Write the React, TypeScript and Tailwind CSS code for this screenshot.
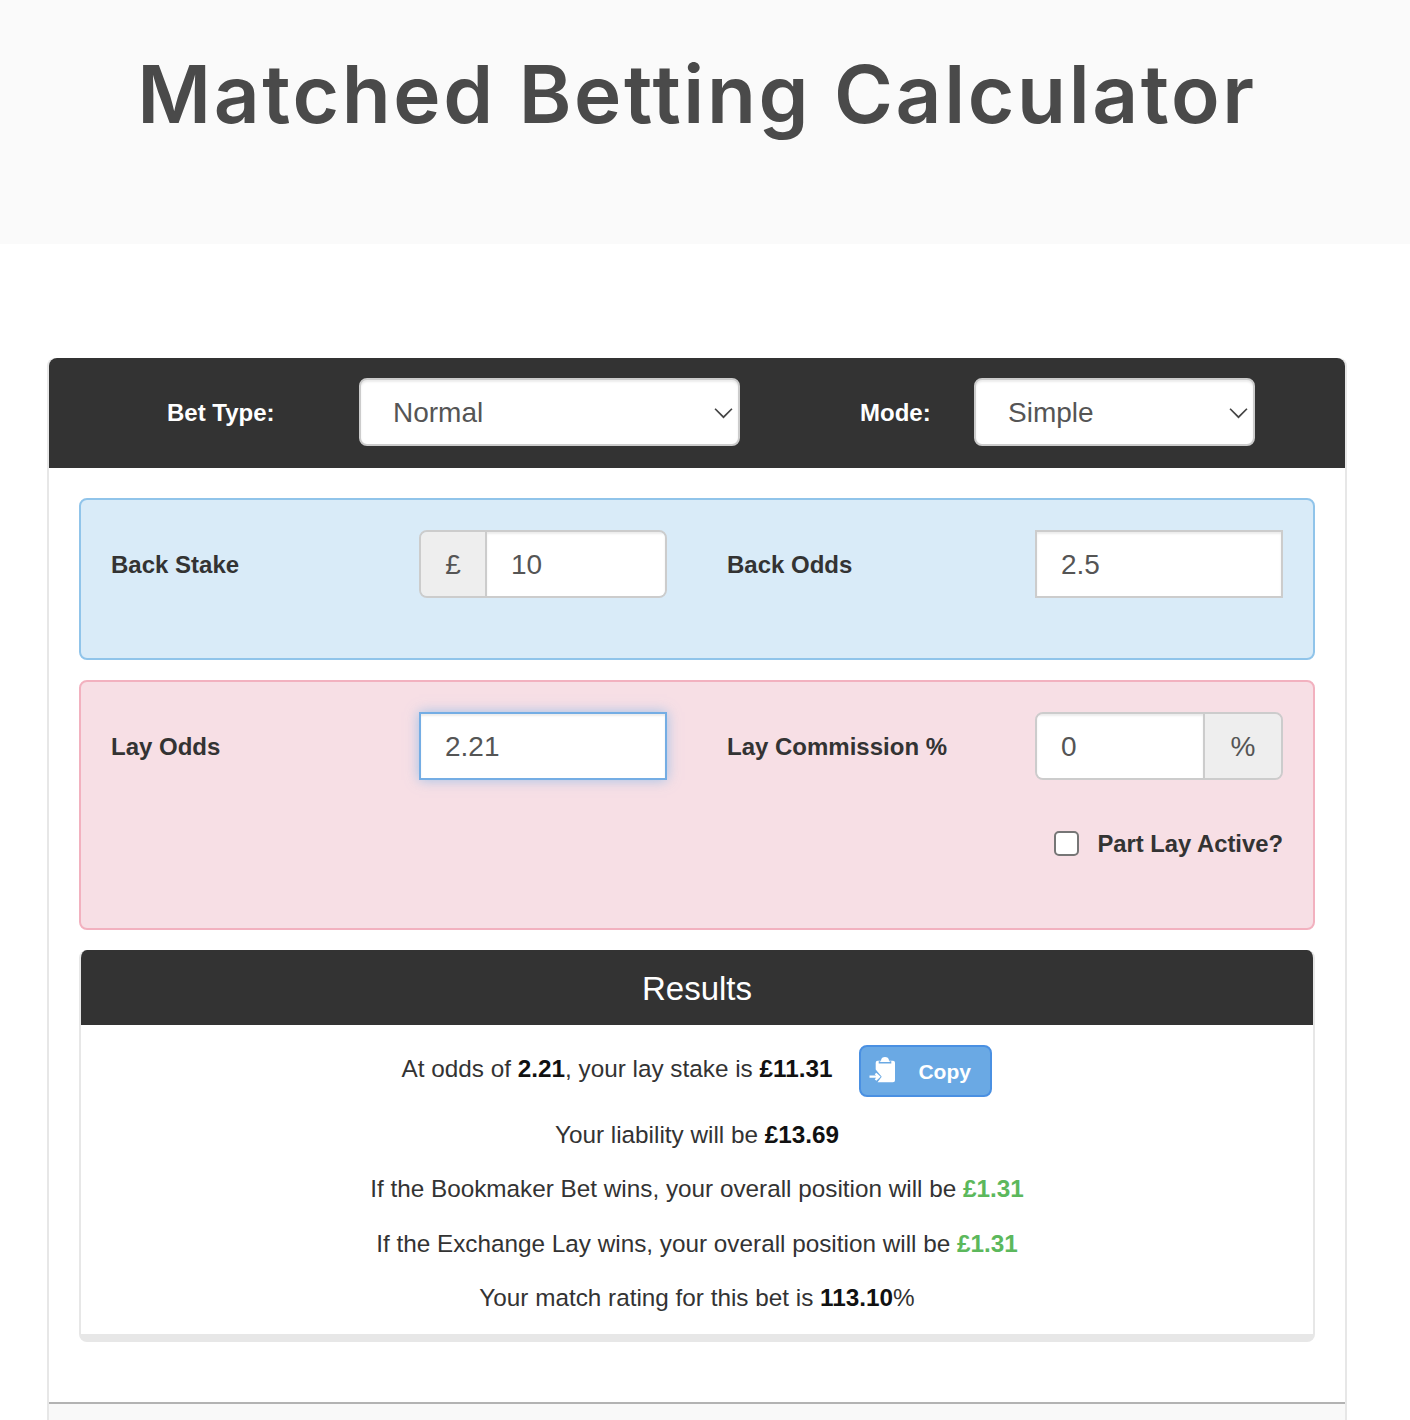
const sans = "font-['Liberation_Sans',Arial,sans-serif]";

function Chevron() {
	return (
		<svg
			className="pointer-events-none absolute top-[26px] right-[7px] size-[19px] text-[#444]"
			fill="none"
			stroke="currentColor"
			strokeWidth="1.6"
			viewBox="0 0 18 18"
		>
			<path d="M1 4.5 L9 12.5 L17 4.5" />
		</svg>
	);
}

function SelectBox({ value, width }: { value: string; width: string }) {
	return (
		<div className={`relative -mt-[2px] ${width}`}>
			<select
				className="h-[68px] w-full appearance-none rounded-lg border-2 border-[#ccc] bg-white px-[32px] pt-[2px] text-[28px] font-normal text-[#555] shadow-[inset_0_2px_2px_rgba(0,0,0,0.08)] outline-none"
				defaultValue={value}
			>
				<option>{value}</option>
			</select>
			<Chevron />
		</div>
	);
}

function CopyIcon() {
	return (
		<svg className="h-[28px] w-[28px]" viewBox="0 0 28 28">
			<path
				d="M8.7 3.7 H12 C12 1 14 0 16 0 C18 0 20 1 20 3.7 H24 Q26 3.7 26 5.7 V23.3 Q26 25.3 24 25.3 H8.5 L12.7 19.7 L6.7 12.5 V5.7 Q6.7 3.7 8.7 3.7 Z"
				fill="white"
			/>
			<path
				d="M10.5 4.2 V5.8 H21.5 V4.2"
				fill="none"
				stroke="#6aa9e4"
				strokeWidth="1.6"
			/>
			<path
				d="M0.5 19.7 H9.5 M6.5 16.5 L10 19.7 L6.5 23"
				fill="none"
				stroke="white"
				strokeWidth="2.3"
			/>
		</svg>
	);
}

export default function App() {
	return (
		<div className={`h-[1420px] overflow-hidden bg-white ${sans}`}>
			<div className="h-[244px] bg-[#fafafa] pt-[40px] pr-[64px] pl-[48px]">
				<h1 className="text-center font-['Inter',sans-serif] text-[80px] leading-[108px] font-semibold tracking-[2.65px] text-[#4a4a4a]">
					Matched Betting Calculator
				</h1>
			</div>

			<div className="mt-[114px] mr-[63px] ml-[47px] rounded-t-lg border-x-2 border-[#e7e7e7]">
				<div className="flex h-[110px] items-center rounded-t-lg bg-[#333] pl-[118px] text-[24px] font-bold text-white">
					<span className="w-[192px]">Bet Type:</span>
					<SelectBox value="Normal" width="w-[381px]" />
					<span className="ml-[120px] w-[114px]">Mode:</span>
					<SelectBox value="Simple" width="w-[281px]" />
				</div>

				<div className="flex flex-col gap-[20px] px-[30px] pt-[30px] text-[24px] font-bold text-[#333]">
					<section className="h-[162px] rounded-lg border-2 border-[#90c4ea] bg-[#d9ebf8] px-[30px] pt-[30px]">
						<div className="flex h-[68px] items-center">
							<label className="w-[308px] pt-[2px]">Back Stake</label>
							<div className="flex h-[68px] w-[248px] overflow-hidden rounded-lg border-2 border-[#ccc] font-normal">
								<span className="flex w-[66px] items-center justify-center border-r-2 border-[#ccc] bg-[#eee] pt-[2px] text-[28px] text-[#555]">
									£
								</span>
								<input
									className="min-w-0 flex-1 bg-white pt-[2px] pl-[24px] text-[28px] text-[#555] shadow-[inset_0_2px_2px_rgba(0,0,0,0.08)] outline-none"
									defaultValue="10"
								/>
							</div>
							<label className="ml-[60px] w-[308px] pt-[2px]">Back Odds</label>
							<input
								className="h-[68px] w-[248px] border-2 border-[#ccc] bg-white pt-[2px] pl-[24px] text-[28px] font-normal text-[#555] shadow-[inset_0_2px_2px_rgba(0,0,0,0.08)] outline-none"
								defaultValue="2.5"
							/>
						</div>
					</section>

					<section className="h-[250px] rounded-lg border-2 border-[#f2b1bf] bg-[#f7dfe5] px-[30px] pt-[30px]">
						<div className="flex h-[68px] items-center">
							<label className="w-[308px] pt-[2px]">Lay Odds</label>
							<input
								className="h-[68px] w-[248px] border-2 border-[#74ade4] bg-white pt-[2px] pl-[24px] text-[28px] font-normal text-[#555] shadow-[inset_0_2px_2px_rgba(0,0,0,0.08),0_0_12px_rgba(102,175,233,0.6)] outline-none"
								defaultValue="2.21"
							/>
							<label className="ml-[60px] w-[308px] pt-[2px]">Lay Commission %</label>
							<div className="flex h-[68px] w-[248px] overflow-hidden rounded-lg border-2 border-[#ccc] font-normal">
								<input
									className="min-w-0 flex-1 bg-white pt-[2px] pl-[24px] text-[28px] text-[#555] shadow-[inset_0_2px_2px_rgba(0,0,0,0.08)] outline-none"
									defaultValue="0"
								/>
								<span className="flex w-[78px] items-center justify-center border-l-2 border-[#ccc] bg-[#eee] pt-[2px] text-[28px] text-[#555]">
									%
								</span>
							</div>
						</div>
						<div className="mt-[46px] flex items-center justify-end gap-[18px]">
							<span className="size-[25px] rounded-[5px] border-2 border-[#767676] bg-white" />
							<span className="text-[23.8px]">Part Lay Active?</span>
						</div>
					</section>

					<section className="h-[392px] overflow-hidden rounded-lg border-x-2 border-b-[8px] border-[#e7e7e7]">
						<div className="flex h-[75px] items-center justify-center bg-[#333] pt-[2px] text-[33px] font-normal text-white">
							Results
						</div>
						<div className="flex flex-col items-center text-[24.3px] font-normal text-[#333]">
							<div className="mt-[20px] flex h-[52px] items-center">
								<p className="-mt-[4px]">
									At odds of <b className="text-[#111]">2.21</b>, your lay stake is{" "}
									<b className="text-[#111]">£11.31</b>
								</p>
								<button
									className="ml-[27px] flex h-[52px] w-[133px] items-center rounded-lg border-2 border-[#4a90e2] bg-[#6aa9e4] pl-[8px] text-[21px] font-bold text-white"
									type="button"
								>
									<CopyIcon />
									<span className="ml-[21px] pt-[2px]">Copy</span>
								</button>
							</div>
							<p className="mt-[24px] leading-[28px]">
								Your liability will be <b className="text-[#111]">£13.69</b>
							</p>
							<p className="mt-[26px] leading-[28px]">
								If the Bookmaker Bet wins, your overall position will be{" "}
								<b className="text-[#5cb85c]">£1.31</b>
							</p>
							<p className="mt-[27px] leading-[28px]">
								If the Exchange Lay wins, your overall position will be{" "}
								<b className="text-[#5cb85c]">£1.31</b>
							</p>
							<p className="mt-[26px] leading-[28px]">
								Your match rating for this bet is <b className="text-[#111]">113.10</b>%
							</p>
						</div>
					</section>
				</div>

				<div className="mt-[60px] h-[100px] border-t-2 border-[#b3b3b3] bg-[#f9f9f9]" />
			</div>
		</div>
	);
}
